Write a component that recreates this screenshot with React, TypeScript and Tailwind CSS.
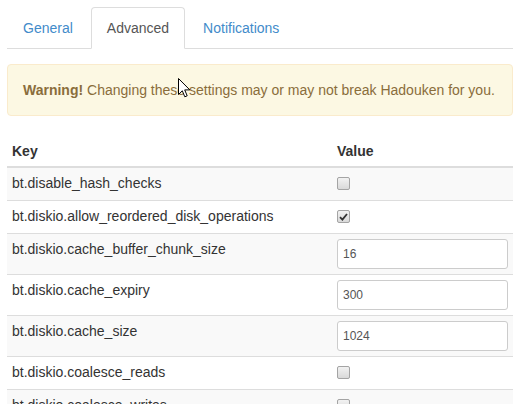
import React from 'react';

type Row = { key: string; kind: 'check' | 'number'; value: boolean | string };

const rows: Row[] = [
  { key: 'bt.disable_hash_checks', kind: 'check', value: false },
  { key: 'bt.diskio.allow_reordered_disk_operations', kind: 'check', value: true },
  { key: 'bt.diskio.cache_buffer_chunk_size', kind: 'number', value: '16' },
  { key: 'bt.diskio.cache_expiry', kind: 'number', value: '300' },
  { key: 'bt.diskio.cache_size', kind: 'number', value: '1024' },
  { key: 'bt.diskio.coalesce_reads', kind: 'check', value: false },
  { key: 'bt.diskio.coalesce_writes', kind: 'check', value: false },
];

const Checkbox = ({ checked }: { checked: boolean }) => (
  <div className="mt-[4px] mb-[5px] flex h-[13px] w-[13px] items-center justify-center rounded-[2px] border border-[#a4a4a4] bg-gradient-to-b from-[#f2f2f2] to-[#d9d9d9]">
    {checked && (
      <svg width="9" height="8" viewBox="0 0 9 8">
        <path d="M1 4.2 L3.4 6.6 L8 1" fill="none" stroke="#333" strokeWidth="1.8" />
      </svg>
    )}
  </div>
);

const Cursor = () => (
  <svg className="absolute left-[178px] top-[78px]" width="13" height="20" viewBox="0 0 13 20">
    <path
      d="M0.5 0.5 L0.5 16.5 L4.3 12.8 L6.8 18.8 L9.2 17.8 L6.7 11.9 L11.8 11.9 Z"
      fill="#fff"
      stroke="#000"
      strokeWidth="1"
      strokeLinejoin="miter"
    />
  </svg>
);

const App = () => {
  return (
    <div className="relative h-[404px] w-[524px] overflow-hidden bg-white font-['Liberation_Sans',Arial,sans-serif] text-[14px] leading-[20px] text-[#333]">
      <div className="w-[506px] ml-[7px]">
        <ul className="mt-[7px] flex border-b border-[#ddd]">
          <li className="mr-[2px] -mb-px">
            <a className="block rounded-t-[4px] border border-transparent px-[15px] py-[10px] text-[#428bca]">General</a>
          </li>
          <li className="mr-[2px] -mb-px">
            <a className="block rounded-t-[4px] border border-[#ddd] border-b-white bg-white px-[15px] py-[10px] text-[#555]">Advanced</a>
          </li>
          <li className="mr-[2px] -mb-px">
            <a className="block rounded-t-[4px] border border-transparent px-[15px] py-[10px] text-[#428bca]">Notifications</a>
          </li>
        </ul>

        <div className="pt-[15px]">
          <div className="mb-[20px] rounded-[4px] border border-[#faebcc] bg-[#fcf8e3] px-[15px] py-[15px] text-[#8a6d3b]">
            <strong>Warning!</strong> Changing these settings may or may not break Hadouken for you.
          </div>

          <table className="w-full border-collapse">
            <thead>
              <tr className="border-b-2 border-[#ddd]">
                <th className="w-[326px] p-[5px] text-left font-bold">Key</th>
                <th className="p-[5px] text-left font-bold">Value</th>
              </tr>
            </thead>
            <tbody>
              {rows.map((r, i) => (
                <tr key={r.key} className={`border-b border-[#ddd] ${i % 2 === 0 ? 'bg-[#f9f9f9]' : 'bg-white'}`}>
                  <td className="p-[5px] align-top">{r.key}</td>
                  <td className="p-[5px] align-top">
                    {r.kind === 'check' ? (
                      <Checkbox checked={r.value as boolean} />
                    ) : (
                      <div className="flex h-[30px] w-[171px] items-center rounded-[3px] border border-[#ccc] bg-white px-[5px] text-[12px] text-[#555]">
                        {r.value as string}
                      </div>
                    )}
                  </td>
                </tr>
              ))}
            </tbody>
          </table>
        </div>
      </div>
      <Cursor />
    </div>
  );
};

export default App;
